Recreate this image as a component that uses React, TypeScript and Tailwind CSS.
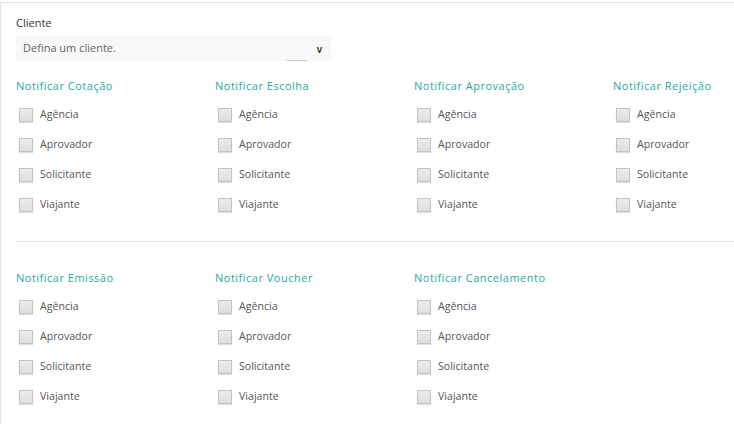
import React from "react";

const opcoes = ["Agência", "Aprovador", "Solicitante", "Viajante"];

const grupo1 = ["Notificar Cotação", "Notificar Escolha", "Notificar Aprovação", "Notificar Rejeição"];
const grupo2 = ["Notificar Emissão", "Notificar Voucher", "Notificar Cancelamento"];

const Checkbox = ({ label }: { label: string }) => {
  return (
    <label className="flex items-center h-[30px] gap-[7px] pl-[3px]">
      <span className="w-[14px] h-[14px] border border-[#c4c4c4] bg-gradient-to-b from-[#ececec] to-[#dedede] shadow-[0_1px_1px_rgba(0,0,0,0.12)]" />
      <span className="text-[10.6px] text-[#555]">{label}</span>
    </label>
  );
};

const Coluna = ({ titulo }: { titulo: string }) => {
  return (
    <div className="flex flex-col">
      <div className="text-[11px] tracking-[0.5px] text-[#1fa9a1] h-[16px] leading-[16px] mb-[6px]">{titulo}</div>
      {opcoes.map((o) => (
        <Checkbox key={o} label={o} />
      ))}
    </div>
  );
};

export default function App() {
  return (
    <div className="w-[734px] h-[424px] overflow-hidden bg-white" style={{ fontFamily: '"Open Sans", sans-serif' }}>
      <div className="mt-[2px] h-[422px] border-l border-t border-[#e3e3e3] pl-[15px] pt-[12px]">
        {/* cliente */}
        <div className="text-[11px] text-[#333] h-[16px] leading-[16px]">Cliente</div>
        <div className="relative mt-[5px] w-[315px] h-[25px] bg-[#f8f8f8] flex items-center pl-[7px]">
          <span className="text-[11px] text-[#666]">Defina um cliente.</span>
          <span className="absolute right-[9px] top-[8px] text-[10px] text-[#222] font-semibold leading-none">v</span>
          <span className="absolute left-[271px] bottom-0 w-[20px] h-[1px] bg-[#ccc]" />
        </div>

        <div className="grid grid-cols-[199px_199px_199px_199px] mt-[17px]">
          {grupo1.map((t) => (
            <Coluna key={t} titulo={t} />
          ))}
        </div>

        <div className="h-px bg-[#e3e3e3] mt-[21px] mb-[28px]" />

        <div className="grid grid-cols-[199px_199px_199px_199px]">
          {grupo2.map((t) => (
            <Coluna key={t} titulo={t} />
          ))}
        </div>
      </div>
    </div>
  );
}
